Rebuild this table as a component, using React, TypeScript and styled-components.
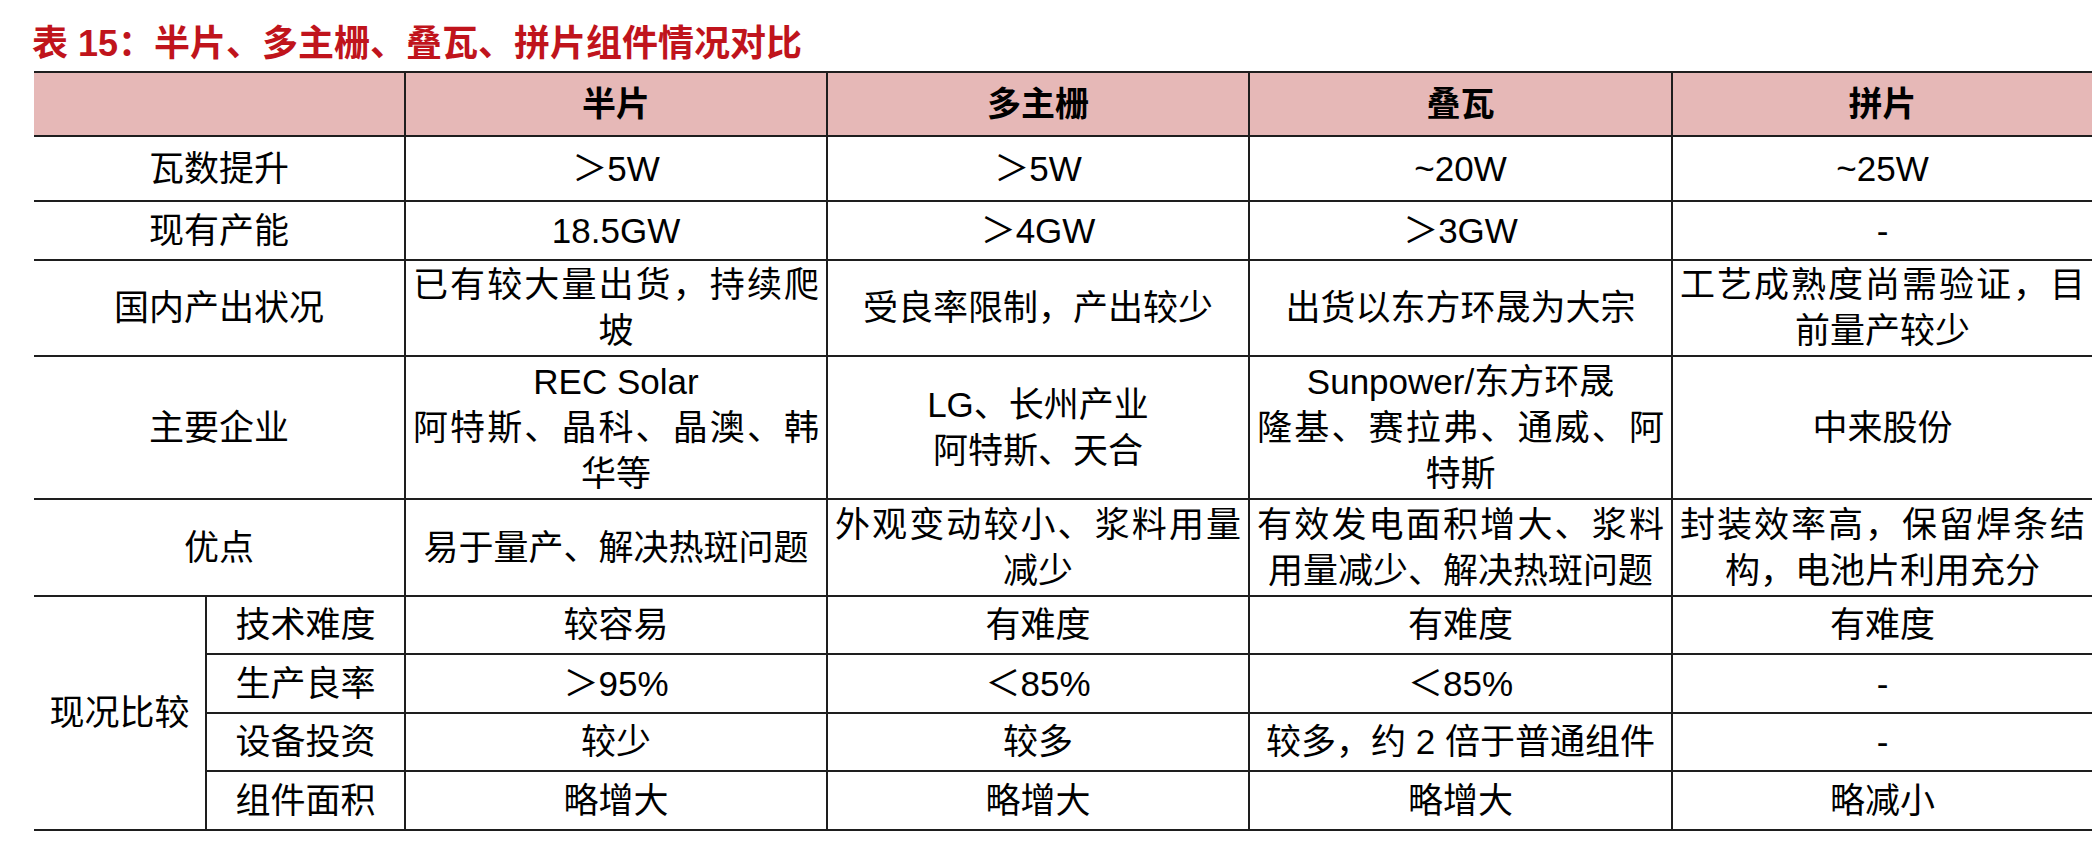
import React from "react";
import styled, { createGlobalStyle } from "styled-components";

const GlobalStyle = createGlobalStyle`
  html, body {
    margin: 0;
    padding: 0;
    background: #ffffff;
  }
  body {
    font-family: "Liberation Sans", "Noto Sans CJK SC", sans-serif;
    color: #000000;
  }
`;

const LINE = "2px solid #1e1e1e";

const columns = ["半片", "多主栅", "叠瓦", "拼片"];

const mainRows = [
    { label: "瓦数提升", values: ["＞5W", "＞5W", "~20W", "~25W"] },
    { label: "现有产能", values: ["18.5GW", "＞4GW", "＞3GW", "-"] },
    {
        label: "国内产出状况",
        values: [
            "已有较大量出货，持续爬坡",
            "受良率限制，产出较少",
            "出货以东方环晟为大宗",
            "工艺成熟度尚需验证，目前量产较少",
        ],
    },
    {
        label: "主要企业",
        values: [
            "REC Solar\n阿特斯、晶科、晶澳、韩华等",
            "LG、长州产业\n阿特斯、天合",
            "Sunpower/东方环晟\n隆基、赛拉弗、通威、阿特斯",
            "中来股份",
        ],
    },
    {
        label: "优点",
        values: [
            "易于量产、解决热斑问题",
            "外观变动较小、浆料用量减少",
            "有效发电面积增大、浆料用量减少、解决热斑问题",
            "封装效率高，保留焊条结构，电池片利用充分",
        ],
    },
];

const subRows = [
    { label: "技术难度", values: ["较容易", "有难度", "有难度", "有难度"] },
    { label: "生产良率", values: ["＞95%", "＜85%", "＜85%", "-"] },
    { label: "设备投资", values: ["较少", "较多", "较多，约 2 倍于普通组件", "-"] },
    { label: "组件面积", values: ["略增大", "略增大", "略增大", "略减小"] },
];

const App = () => {
    return (
        <Page>
            <GlobalStyle />
            <Title>表 15：半片、多主栅、叠瓦、拼片组件情况对比</Title>
            <Table>
                <Cell $span={2} $head />
                {columns.map((c, i) => (
                    <Cell key={c} $head $last={i === columns.length - 1}>
                        <CellText>{c}</CellText>
                    </Cell>
                ))}

                {mainRows.map((row) => (
                    <React.Fragment key={row.label}>
                        <Cell $span={2}>
                            <CellText>{row.label}</CellText>
                        </Cell>
                        {row.values.map((v, i) => (
                            <Cell key={i} $last={i === row.values.length - 1}>
                                <CellText>{v}</CellText>
                            </Cell>
                        ))}
                    </React.Fragment>
                ))}

                <Cell $rows={subRows.length}>
                    <CellText>现况比较</CellText>
                </Cell>
                {subRows.map((row) => (
                    <React.Fragment key={row.label}>
                        <Cell>
                            <CellText>{row.label}</CellText>
                        </Cell>
                        {row.values.map((v, i) => (
                            <Cell key={i} $last={i === row.values.length - 1}>
                                <CellText>{v}</CellText>
                            </Cell>
                        ))}
                    </React.Fragment>
                ))}
            </Table>
        </Page>
    );
};

const Page = styled.div`
    width: 2096px;
    height: 842px;
    padding-left: 34px;
    box-sizing: border-box;
    overflow: hidden;
`;

const Title = styled.h1`
    margin: 0 0 0 -2px;
    height: 71px;
    display: flex;
    align-items: center;
    padding-top: 8px;
    box-sizing: border-box;
    font-family: "Liberation Sans", "Noto Sans CJK SC", sans-serif;
    font-size: 36px;
    font-weight: 700;
    color: #c0141c;
    white-space: nowrap;
`;

const Table = styled.div`
    display: grid;
    width: 2058px;
    grid-template-columns: 173px 199px 422px 422px 423px 419px;
    grid-template-rows: 64px 65px 59px 96px 143px 97px 58px 59px 58px 59px;
    border-top: ${LINE};
`;

const Cell = styled.div<{ $head?: boolean; $last?: boolean; $span?: number; $rows?: number }>`
    grid-column: span ${({ $span }) => $span ?? 1};
    grid-row: span ${({ $rows }) => $rows ?? 1};
    display: flex;
    align-items: center;
    padding: 0 7px;
    box-sizing: border-box;
    border-bottom: ${LINE};
    border-right: ${({ $last }) => ($last ? "none" : LINE)};
    background: ${({ $head }) => ($head ? "#e6b8b7" : "transparent")};
    font-size: ${({ $head }) => ($head ? "34px" : "35px")};
    font-weight: ${({ $head }) => ($head ? 700 : 400)};
    line-height: 46px;
`;

const CellText = styled.div`
    width: 100%;
    white-space: pre-line;
    text-align: justify;
    text-align-last: center;
`;

export default App;
